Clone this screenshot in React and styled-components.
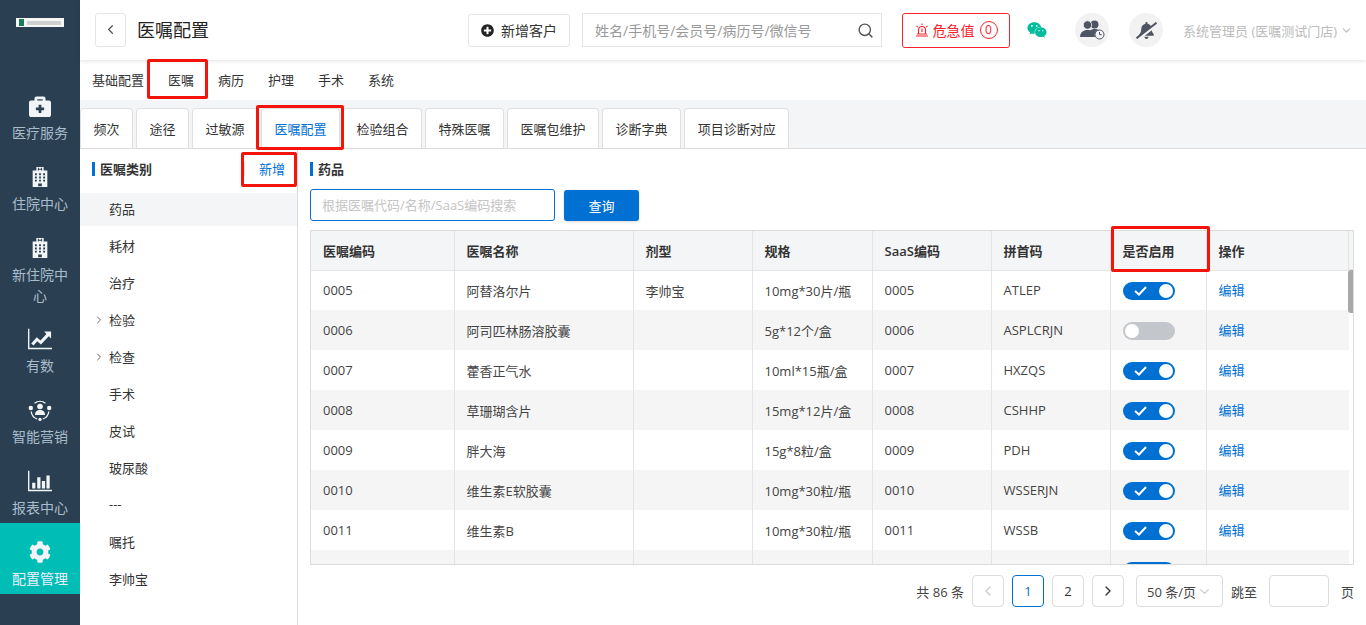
import React from 'react'
import styled, { createGlobalStyle } from 'styled-components'
import { FaBriefcaseMedical, FaCog, FaBellSlash, FaWeixin, FaPlusCircle } from 'react-icons/fa'
import { FiChevronLeft, FiChevronRight, FiChevronDown, FiSearch } from 'react-icons/fi'

const GlobalStyle = createGlobalStyle`
  html, body { margin: 0; height: 100%; overflow: hidden; }
  #root { height: 100%; }
  * { box-sizing: border-box; }
  body {
    font-family: "Open Sans", "Noto Sans CJK SC", sans-serif;
    font-size: 13px;
    color: #333;
    background: #fff;
  }
`

const Page = styled.div`
  display: flex;
  height: 625px;
  width: 1366px;
  overflow: hidden;
`

const Sidebar = styled.aside`
  width: 80px;
  flex: none;
  background: #2a4052;
  color: #a9bccb;
`

const LogoWrap = styled.div`
  height: 79px;
  padding: 18px 16px 0;
`

const Logo = styled.div`
  width: 48px;
  height: 9px;
  background: #f6f6f4;
  display: flex;
  align-items: center;
  gap: 3px;
  padding: 0 3px;
  i {
    width: 5px;
    height: 7px;
    background: #1a7a5e;
  }
  b {
    flex: 1;
    height: 4px;
    background: #cfd1d0;
  }
`

const NavItem = styled.div`
  min-height: 71px;
  padding: ${p => (p.$low ? '18px' : '16px')} 8px 4px;
  text-align: center;
  font-size: 14px;
  line-height: 21px;
  background: ${p => (p.$active ? '#00bdb5' : 'transparent')};
  color: ${p => (p.$active ? '#eef' : '#a9bccb')};
  svg {
    display: block;
    margin: 0 auto 5px;
    width: 24px;
    height: 22px;
    color: #f2f5f7;
  }
`

const Main = styled.div`
  flex: 1;
  min-width: 0;
  display: flex;
  flex-direction: column;
`

const Header = styled.header`
  height: 60px;
  flex: none;
  display: flex;
  align-items: center;
  padding: 0 15px;
  background: #fff;
  box-shadow: 0 1px 4px rgba(0, 0, 0, 0.12);
  position: relative;
  z-index: 2;
  & > * { flex: none; }
`

const BackBtn = styled.button`
  width: 31px;
  height: 34px;
  padding: 0;
  border: 1px solid #e6e6e6;
  border-radius: 3px;
  background: #fff;
  display: flex;
  align-items: center;
  justify-content: center;
  color: #555;
  margin-top: -1px;
`

const Title = styled.h1`
  margin: -3px 0 0 11px;
  font-size: 18px;
  font-weight: 400;
  color: #222;
  width: 329px;
`

const AddBtn = styled.button`
  width: 102px;
  height: 33px;
  border: 1px solid #e6e6e6;
  border-radius: 3px;
  background: #fff;
  display: flex;
  align-items: center;
  justify-content: center;
  gap: 7px;
  font: inherit;
  font-size: 14px;
  color: #333;
  padding: 0;
  margin-left: 2px;
`

const SearchBox = styled.div`
  width: 300px;
  height: 34px;
  margin-left: 12px;
  border: 1px solid #e6e6e6;
  display: flex;
  align-items: center;
  justify-content: space-between;
  padding: 0 7px 0 12px;
  color: #999;
  font-size: 14px;
  svg { color: #555; }
`

const AlertBtn = styled.button`
  width: 108px;
  height: 35px;
  margin-left: 20px;
  border: 1px solid #f5222d;
  border-radius: 3px;
  background: #fff;
  color: #f5222d;
  font: inherit;
  font-size: 14px;
  display: flex;
  align-items: center;
  justify-content: center;
  gap: 4px;
  padding: 0;
  svg { flex: none; }
`

const AlertCount = styled.span`
  width: 18px;
  height: 18px;
  border: 1px solid #f5222d;
  border-radius: 50%;
  font-size: 12px;
  line-height: 16px;
  text-align: center;
  margin-left: 1px;
`

const WechatIcon = styled.span`
  display: flex;
  margin: 0 28px 0 17px;
  color: #00bc9b;
  font-size: 20px;
`

const RoundIcon = styled.span`
  width: 34px;
  height: 34px;
  border-radius: 50%;
  background: #f2f2f2;
  color: #4f5463;
  display: flex;
  align-items: center;
  justify-content: center;
  margin-right: 20px;
  svg { transform: ${p => (p.$flip ? 'scaleX(-1)' : 'none')}; }
`

const UserName = styled.div`
  display: flex;
  align-items: center;
  gap: 3px;
  color: #bbb;
  font-size: 13px;
  white-space: nowrap;
`

const SubNav = styled.nav`
  height: 40px;
  flex: none;
  display: flex;
  align-items: center;
  padding: 0 0 2px 12px;
  gap: 24px;
  background: #fff;
  color: #333;
`

const SubNavItem = styled.span`
  position: relative;
`

const Marker = styled.i`
  position: absolute;
  left: ${p => p.$l}px;
  top: ${p => p.$t}px;
  width: ${p => p.$w}px;
  height: ${p => p.$h}px;
  border: 3px solid #f5140c;
  border-radius: 2px;
  pointer-events: none;
  z-index: 5;
`

const TabBar = styled.div`
  height: 49px;
  flex: none;
  display: flex;
  align-items: flex-end;
  gap: 3px;
  background: #f4f5f7;
  border-bottom: 1px solid #dcdcdc;
`

const Tab = styled.div`
  height: 41px;
  padding: 0 12.5px 1px;
  margin-bottom: -1px;
  display: flex;
  align-items: center;
  position: relative;
  background: #fff;
  border: 1px solid #e0e0e0;
  border-bottom: 1px solid ${p => (p.$active ? '#fff' : '#dcdcdc')};
  border-radius: 4px 4px 0 0;
  color: ${p => (p.$active ? '#0070d2' : '#333')};
`

const Body = styled.div`
  flex: 1;
  min-height: 0;
  display: flex;
  background: #fff;
`

const Categories = styled.div`
  width: 218px;
  flex: none;
  border-right: 1px solid #dcdcdc;
`

const CatHead = styled.div`
  height: 40px;
  margin-bottom: 4px;
  display: flex;
  align-items: center;
  justify-content: space-between;
  padding: 0 12px;
`

const SectionTitle = styled.div`
  border-left: 3px solid #0070d2;
  padding-left: 5px;
  line-height: 14px;
  font-weight: 600;
  color: #333;
`

const AddLink = styled.span`
  color: #0070d2;
  position: relative;
  padding-left: 14px;
  line-height: 14px;
  border-left: 1px solid #e4e4e4;
`

const CatItem = styled.div`
  height: 33px;
  margin-bottom: 4px;
  padding: 0 0 3px 29px;
  display: flex;
  align-items: center;
  position: relative;
  background: ${p => (p.$active ? '#f4f5f7' : 'transparent')};
  svg {
    position: absolute;
    left: 13px;
    top: 10px;
    color: #666;
  }
`

const Content = styled.div`
  flex: 1;
  min-width: 0;
  padding: 13px 12px 0;
`

const SearchRow = styled.div`
  display: flex;
  gap: 9px;
  margin: 13px 0 9px;
`

const SearchInput = styled.div`
  width: 245px;
  height: 32px;
  border: 1px solid #0070d2;
  border-radius: 3px;
  display: flex;
  align-items: center;
  padding: 0 0 1px 11px;
  color: #c4c4c4;
`

const QueryBtn = styled.button`
  width: 75px;
  height: 31px;
  margin-top: 1px;
  border: 0;
  border-radius: 3px;
  background: #0070d2;
  color: #fff;
  font: inherit;
  box-shadow: 0 1px 3px rgba(0, 0, 0, 0.15);
`

const TableArea = styled.div`
  position: relative;
  width: 1044px;
`

const TableWrap = styled.div`
  height: 335px;
  border: 1px solid #dcdcdc;
  overflow: hidden;
  position: relative;
`

const Table = styled.table`
  width: 1038px;
  table-layout: fixed;
  border-collapse: collapse;
  th, td {
    height: 40px;
    padding: 0 12px;
    text-align: left;
    border-left: 1px solid #e4e4e4;
    white-space: nowrap;
  }
  th:first-child, td:first-child { border-left: 0; }
  th {
    height: 39px;
    font-weight: 600;
    background: #f4f5f7;
    border-bottom: 1px solid #e4e4e4;
    color: #333;
  }
  tbody tr:nth-child(even) td { background: #f5f5f5; }
  td { color: #444; }
`

const HeadFill = styled.div`
  position: absolute;
  top: 0;
  right: 0;
  width: 5px;
  height: 39px;
  background: #f4f5f7;
  border-left: 1px solid #e4e4e4;
  border-bottom: 1px solid #e4e4e4;
`

const ScrollThumb = styled.div`
  position: absolute;
  top: 39px;
  right: 0;
  width: 5px;
  height: 43px;
  background: #a8a8a8;
  border-radius: 3px 0 0 3px;
`

const Switch = styled.span`
  display: inline-flex;
  vertical-align: middle;
  align-items: center;
  width: 52px;
  height: 18px;
  border-radius: 9px;
  padding: 0 2px;
  background: ${p => (p.$on ? '#0070d2' : '#c3c7cb')};
  justify-content: ${p => (p.$on ? 'space-between' : 'flex-start')};
  i {
    width: 14px;
    height: 14px;
    border-radius: 50%;
    background: #fff;
  }
  svg { margin-left: 9px; }
`

const EditLink = styled.a`
  display: block;
  margin-top: -2px;
  color: #0070d2;
`

const Pager = styled.div`
  display: flex;
  align-items: center;
  justify-content: flex-end;
  margin-top: 10px;
  width: 1044px;
  color: #444;
`

const PageBtn = styled.span`
  width: 32px;
  height: 32px;
  margin-left: 8px;
  border: 1px solid ${p => (p.$active ? '#0070d2' : '#dcdcdc')};
  border-radius: 4px;
  display: flex;
  align-items: center;
  justify-content: center;
  color: ${p => (p.$active ? '#0070d2' : p.$off ? '#ccc' : '#333')};
`

const SizeSelect = styled.span`
  width: 87px;
  height: 32px;
  margin: 0 8px 0 12px;
  border: 1px solid #dcdcdc;
  border-radius: 4px;
  display: flex;
  align-items: center;
  justify-content: center;
  gap: 1px;
  svg { color: #ccc; }
`

const JumpInput = styled.span`
  width: 60px;
  height: 32px;
  margin: 0 12px;
  border: 1px solid #dcdcdc;
  border-radius: 4px;
`

const columns = [
  { name: '医嘱编码', w: 143 },
  { name: '医嘱名称', w: 179 },
  { name: '剂型', w: 119 },
  { name: '规格', w: 120 },
  { name: 'SaaS编码', w: 119 },
  { name: '拼首码', w: 119 },
  { name: '是否启用', w: 96 },
  { name: '操作', w: 143 },
]

const rows = [
  ['0005', '阿替洛尔片', '李帅宝', '10mg*30片/瓶', '0005', 'ATLEP', true],
  ['0006', '阿司匹林肠溶胶囊', '', '5g*12个/盒', '0006', 'ASPLCRJN', false],
  ['0007', '藿香正气水', '', '10ml*15瓶/盒', '0007', 'HXZQS', true],
  ['0008', '草珊瑚含片', '', '15mg*12片/盒', '0008', 'CSHHP', true],
  ['0009', '胖大海', '', '15g*8粒/盒', '0009', 'PDH', true],
  ['0010', '维生素E软胶囊', '', '10mg*30粒/瓶', '0010', 'WSSERJN', true],
  ['0011', '维生素B', '', '10mg*30粒/瓶', '0011', 'WSSB', true],
  ['', '', '', '', '', '', true],
]

const categories = ['药品', '耗材', '治疗', '检验', '检查', '手术', '皮试', '玻尿酸', '---', '嘱托', '李帅宝']
const tabs = ['频次', '途径', '过敏源', '医嘱配置', '检验组合', '特殊医嘱', '医嘱包维护', '诊断字典', '项目诊断对应']

const HospitalIcon = () => (
  <svg viewBox="0 0 24 24" fill="currentColor">
    <path fillRule="evenodd" d="M8 1h8v4h4v18H4V5h4zm1.700 1v3h1V4h2.600v1h1V2h-1v1h-2.600V2zM6.500 8v2h2V8zm4.500 0v2h2V8zm4.500 0v2h2V8zM6.500 11.500v2h2v-2zm4.500 0v2h2v-2zm4.500 0v2h2v-2zM6.500 15v2h2v-2zm4.500 0v2h2v-2zm4.500 0v2h2v-2zM10 19v3h4v-3z" />
  </svg>
)

const TrendIcon = () => (
  <svg viewBox="0 0 26 22" fill="currentColor">
    <path d="M0 0h1.500v20.500H26V22H0z" />
    <path d="M3.500 16l6-7 4 3.500L20 5.500 17.500 3H25v7.500L22.500 8l-8.500 9-4-3.500L6 18z" />
  </svg>
)

const MarketingIcon = () => (
  <svg viewBox="0 0 24 22" fill="none" stroke="currentColor" strokeWidth="1.300">
    <path d="M6.500 4.200A9 9 0 0 1 17.500 4.200M3.200 12.500a9 9 0 0 0 6 7.500M20.800 12.500a9 9 0 0 1-6 7.500" />
    <g fill="currentColor" stroke="none">
      <circle cx="12" cy="7.500" r="2.800" />
      <path d="M7 16c0-3.500 2-5 5-5s5 1.500 5 5z" />
      <circle cx="2.800" cy="9" r="2.200" />
      <circle cx="21.200" cy="9" r="2.200" />
      <circle cx="12" cy="20.400" r="1.600" />
    </g>
  </svg>
)

const BarsIcon = () => (
  <svg viewBox="0 0 26 22" fill="currentColor">
    <path d="M0 0h1.500v20.500H26V22H0z" />
    <path d="M4.500 13h3.500v6H4.500zM10 7h3.500v12H10zM15 11h3.500v8H15zM20 5h3.500v14H20z" />
  </svg>
)

const UsersClockIcon = () => (
  <svg width="25" height="20" viewBox="0 0 25 20" fill="currentColor">
    <circle cx="14.500" cy="4.500" r="4" />
    <path d="M10 10.500c1-1 2.800-1.500 4.500-1.500 3.500 0 6.500 2 6.500 5H12.500c0-1.500-1-2.700-2.500-3.500z" />
    <circle cx="7.500" cy="5" r="4.200" stroke="#f2f2f2" strokeWidth=".8" />
    <path d="M0 17c0-4.500 3.500-7 7.500-7s7.500 2.500 7.500 7z" />
    <circle cx="19.500" cy="14.500" r="4.500" fill="#f2f2f2" stroke="currentColor" strokeWidth="1" />
    <path d="M19.500 12v2.700h2.200" fill="none" stroke="currentColor" strokeWidth="1" />
  </svg>
)

const AlarmIcon = () => (
  <svg width="14" height="14" viewBox="0 0 14 14" fill="none" stroke="currentColor" strokeWidth="1.100">
    <path d="M3.500 11V7a3.500 3.500 0 0 1 7 0v4M1 13h12M2 11h10M7 5.500V9M7 .5v1.500M1.500 3l1.200 1M12.500 3l-1.200 1" />
  </svg>
)

const CheckMark = () => (
  <svg width="13" height="10" viewBox="0 0 13 10" fill="none" stroke="#fff" strokeWidth="2">
    <path d="M1 5l4 3.500L12 1" />
  </svg>
)

export default function App() {
  return (
    <Page>
      <GlobalStyle />
      <Sidebar>
        <LogoWrap>
          <Logo><i /><b /></Logo>
        </LogoWrap>
        <NavItem><FaBriefcaseMedical />医疗服务</NavItem>
        <NavItem><HospitalIcon />住院中心</NavItem>
        <NavItem><HospitalIcon />新住院中心</NavItem>
        <NavItem $low><TrendIcon />有数</NavItem>
        <NavItem $low><MarketingIcon />智能营销</NavItem>
        <NavItem $low><BarsIcon />报表中心</NavItem>
        <NavItem $low $active><FaCog />配置管理</NavItem>
      </Sidebar>
      <Main>
        <Header>
          <BackBtn><FiChevronLeft size={15} /></BackBtn>
          <Title>医嘱配置</Title>
          <AddBtn><FaPlusCircle size={13} color="#222" />新增客户</AddBtn>
          <SearchBox>
            姓名/手机号/会员号/病历号/微信号
            <FiSearch size={17} />
          </SearchBox>
          <AlertBtn><AlarmIcon />危急值<AlertCount>0</AlertCount></AlertBtn>
          <WechatIcon><FaWeixin /></WechatIcon>
          <RoundIcon><UsersClockIcon /></RoundIcon>
          <RoundIcon $flip><FaBellSlash size={21} /></RoundIcon>
          <UserName>系统管理员 (医嘱测试门店)<FiChevronDown size={13} /></UserName>
        </Header>
        <SubNav>
          <SubNavItem>基础配置</SubNavItem>
          <SubNavItem>医嘱<Marker $l={-21} $t={-11} $w={61} $h={40} /></SubNavItem>
          <SubNavItem>病历</SubNavItem>
          <SubNavItem>护理</SubNavItem>
          <SubNavItem>手术</SubNavItem>
          <SubNavItem>系统</SubNavItem>
        </SubNav>
        <TabBar>
          {tabs.map(t => (
            <Tab key={t} $active={t === '医嘱配置'}>
              {t}
              {t === '医嘱配置' && <Marker $l={-6} $t={-4} $w={88} $h={45} />}
            </Tab>
          ))}
        </TabBar>
        <Body>
          <Categories>
            <CatHead>
              <SectionTitle>医嘱类别</SectionTitle>
              <AddLink>新增<Marker $l={-4} $t={-10} $w={56} $h={35} /></AddLink>
            </CatHead>
            {categories.map((c, i) => (
              <CatItem key={c} $active={i === 0}>
                {(c === '检验' || c === '检查') && <FiChevronRight size={12} />}
                {c}
              </CatItem>
            ))}
          </Categories>
          <Content>
            <SectionTitle>药品</SectionTitle>
            <SearchRow>
              <SearchInput>根据医嘱代码/名称/SaaS编码搜索</SearchInput>
              <QueryBtn>查询</QueryBtn>
            </SearchRow>
            <TableArea>
              <TableWrap>
                <Table>
                  <colgroup>
                    {columns.map(c => <col key={c.name} width={c.w} />)}
                  </colgroup>
                  <thead>
                    <tr>
                      {columns.map(c => <th key={c.name}>{c.name}</th>)}
                    </tr>
                  </thead>
                  <tbody>
                    {rows.map((r, n) => (
                      <tr key={n}>
                        {r.slice(0, 6).map((v, i) => <td key={i}>{v}</td>)}
                        <td>
                          <Switch $on={r[6]}>
                            {r[6] && <CheckMark />}
                            <i />
                          </Switch>
                        </td>
                        <td>{r[0] && <EditLink>编辑</EditLink>}</td>
                      </tr>
                    ))}
                  </tbody>
                </Table>
                <HeadFill />
                <ScrollThumb />
              </TableWrap>
              <Marker $l={801} $t={-4} $w={99} $h={46} />
            </TableArea>
            <Pager>
              共 86 条
              <PageBtn $off><FiChevronLeft size={16} /></PageBtn>
              <PageBtn $active>1</PageBtn>
              <PageBtn>2</PageBtn>
              <PageBtn><FiChevronRight size={16} /></PageBtn>
              <SizeSelect>50 条/页<FiChevronDown size={15} /></SizeSelect>
              跳至
              <JumpInput />
              页
            </Pager>
          </Content>
        </Body>
      </Main>
    </Page>
  )
}
